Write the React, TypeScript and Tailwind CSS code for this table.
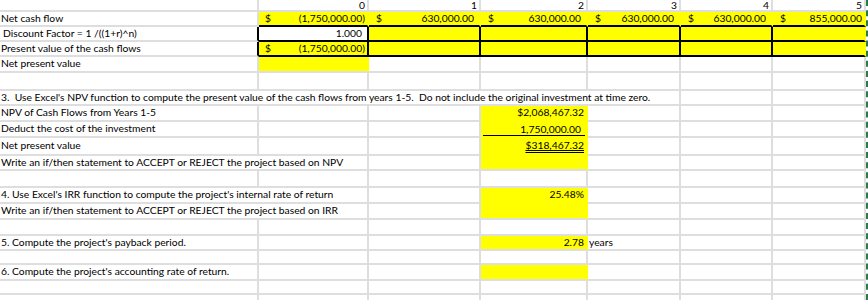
import React from "react";

const base = "flex items-center border-r-2 border-b-2 whitespace-nowrap min-w-0";
const gray = "border-[#dedede]";
const yel = "bg-[#ffff00] border-[#ffff00]";
const hdr = "border-[#dedede] justify-end items-end pr-[2px] leading-[10px]";

function Cell({ className = "", children }: { className?: string; children?: React.ReactNode }) {
  return <div className={`${base} ${className}`}>{children}</div>;
}

function Acct({ v, pl = "pl-[7px]", pr = "pr-[5px]" }: { v: string; pl?: string; pr?: string }) {
  return (
    <div className={`flex w-full justify-between ${pl} ${pr}`}>
      <span>$</span>
      <span>{v}</span>
    </div>
  );
}

function Empty({ n }: { n: number }) {
  return (
    <>
      {Array.from({ length: n }).map((_, i) => (
        <Cell key={i} className={gray} />
      ))}
    </>
  );
}

export default function App() {
  return (
    <div className="w-[868px] h-[300px] overflow-hidden bg-white text-black font-['Lato',sans-serif] text-[10.3px] flex">
      <div className="grid w-[866px] shrink-0 grid-cols-[259px_110px_112px_107px_93px_92px_93px] grid-rows-[12px_15px_15px_15px_16px_18px_15px_16px_16px_18px_15px_17px_16px_16px_16px_15px_14px_16px_14px_20px]">
        {/* Row 1 */}
        <Cell className={gray} />
        <Cell className={hdr}>0</Cell>
        <Cell className={hdr}>1</Cell>
        <Cell className={hdr}>2</Cell>
        <Cell className={hdr}>3</Cell>
        <Cell className={hdr}>4</Cell>
        <Cell className={hdr}>5</Cell>

        {/* Row 2 */}
        <Cell className={`${gray} pl-[1px]`}>Net cash flow</Cell>
        <Cell className="bg-[#ffff00] border-r-[#ffff00] border-b-black"><Acct v="(1,750,000.00)" pl="pl-[6px]" pr="pr-[2px]" /></Cell>
        <Cell className="bg-[#ffff00] border-r-[#ffff00] border-b-black"><Acct v="630,000.00" /></Cell>
        <Cell className="bg-[#ffff00] border-r-[#ffff00] border-b-black"><Acct v="630,000.00" /></Cell>
        <Cell className="bg-[#ffff00] border-r-[#ffff00] border-b-black"><Acct v="630,000.00" /></Cell>
        <Cell className="bg-[#ffff00] border-r-[#ffff00] border-b-black"><Acct v="630,000.00" /></Cell>
        <Cell className="bg-[#ffff00] border-r-[#ffff00] border-b-black"><Acct v="855,000.00" pr="pr-[2px]" /></Cell>

        {/* Row 3 */}
        <Cell className="border-r-black border-b-[#dedede] pl-[3px]">Discount Factor = 1 /((1+r)^n)</Cell>
        <Cell className="border-black justify-end pr-[5px]">1.000</Cell>
        <Cell className="bg-[#ffff00] border-black" />
        <Cell className="bg-[#ffff00] border-black" />
        <Cell className="bg-[#ffff00] border-black" />
        <Cell className="bg-[#ffff00] border-black" />
        <Cell className="bg-[#ffff00] border-r-[#ffff00] border-b-black" />

        {/* Row 4 */}
        <Cell className="border-r-black border-b-[#dedede] pl-[1px]">Present value of the cash flows</Cell>
        <Cell className="bg-[#ffff00] border-black"><Acct v="(1,750,000.00)" pl="pl-[6px]" pr="pr-[2px]" /></Cell>
        <Cell className="bg-[#ffff00] border-black" />
        <Cell className="bg-[#ffff00] border-black" />
        <Cell className="bg-[#ffff00] border-black" />
        <Cell className="bg-[#ffff00] border-black" />
        <Cell className="bg-[#ffff00] border-r-[#ffff00] border-b-black" />

        {/* Row 5 */}
        <Cell className={`${gray} pl-[1px]`}>Net present value</Cell>
        <Cell className="bg-[#ffff00] border-r-[#ffff00] border-b-[#dedede]" />
        <Empty n={5} />

        {/* Row 6 */}
        <Empty n={7} />

        {/* Row 7 */}
        <Cell className={`${gray} col-span-5 pl-[1px] whitespace-pre`}>
          {"3.  Use Excel's NPV function to compute the present value of the cash flows from years 1-5.  Do not include the original investment at time zero."}
        </Cell>
        <Empty n={2} />

        {/* Row 8 */}
        <Cell className={`${gray} pl-[1px]`}>NPV of Cash Flows from Years 1-5</Cell>
        <Empty n={2} />
        <Cell className={`${yel} justify-end pr-[2px]`}>$2,068,467.32</Cell>
        <Empty n={3} />

        {/* Row 9 */}
        <Cell className={`${gray} pl-[1px]`}>Deduct the cost of the investment</Cell>
        <Empty n={2} />
        <Cell className={`${yel}`}>
          <div className="ml-[2px] mr-[1px] w-full border-b border-black text-right pr-[4px] leading-[12px] mt-[1px]">1,750,000.00</div>
        </Cell>
        <Empty n={3} />

        {/* Row 10 */}
        <Cell className={`${gray} pl-[1px]`}>Net present value</Cell>
        <Empty n={2} />
        <Cell className={`${yel} justify-end pr-[2px]`}>
          <span className="underline decoration-double decoration-1 underline-offset-[1px]">$318,467.32</span>
        </Cell>
        <Empty n={3} />

        {/* Row 11 */}
        <Cell className={`${gray} col-span-2 pl-[1px]`}>Write an if/then statement to ACCEPT or REJECT the project based on NPV</Cell>
        <Empty n={1} />
        <Cell className="bg-[#ffff00] border-r-[#ffff00] border-b-[#dedede]" />
        <Empty n={3} />

        {/* Row 12 */}
        <Empty n={7} />

        {/* Row 13 */}
        <Cell className={`${gray} col-span-2 pl-[1px]`}>4. Use Excel's IRR function to compute the project's internal rate of return</Cell>
        <Empty n={1} />
        <Cell className={`${yel} justify-end pr-[2px]`}>25.48%</Cell>
        <Empty n={3} />

        {/* Row 14 */}
        <Cell className={`${gray} col-span-2 pl-[1px]`}>Write an if/then statement to ACCEPT or REJECT the project based on IRR</Cell>
        <Empty n={1} />
        <Cell className="bg-[#ffff00] border-r-[#ffff00] border-b-[#dedede]" />
        <Empty n={3} />

        {/* Row 15 */}
        <Empty n={7} />

        {/* Row 16 */}
        <Cell className={`${gray} pl-[1px]`}>5. Compute the project's payback period.</Cell>
        <Empty n={2} />
        <Cell className="bg-[#ffff00] border-r-[#ffff00] border-b-[#dedede] justify-end pr-[2px]">2.78</Cell>
        <Cell className={`${gray} pl-[1px]`}>years</Cell>
        <Empty n={2} />

        {/* Row 17 */}
        <Empty n={7} />

        {/* Row 18 */}
        <Cell className={`${gray} pl-[1px]`}>6. Compute the project's accounting rate of return.</Cell>
        <Empty n={2} />
        <Cell className="bg-[#ffff00] border-r-[#ffff00] border-b-[#dedede]" />
        <Empty n={3} />

        {/* Row 19 */}
        <Empty n={7} />

        {/* Row 20 */}
        <Empty n={7} />
      </div>
      <div className="w-[2px] h-[300px] shrink-0 border-l-2 border-dashed border-[#2b7a4b]" />
    </div>
  );
}
